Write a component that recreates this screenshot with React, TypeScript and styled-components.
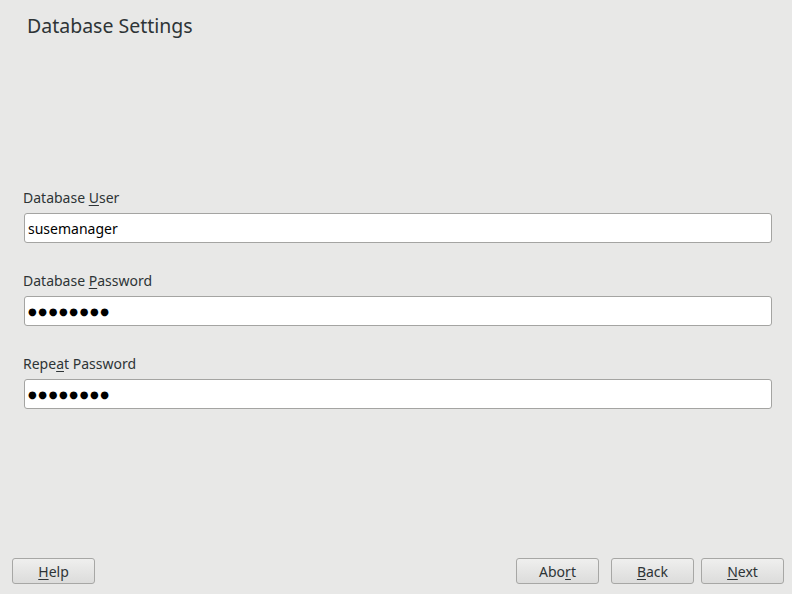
import React, { useState } from "react";
import styled, { createGlobalStyle } from "styled-components";

const GlobalStyle = createGlobalStyle`
  html, body {
    margin: 0;
    padding: 0;
    background: #e8e8e7;
    font-family: "Noto Sans", "Open Sans", sans-serif;
    color: #2e3436;
  }
`;

const fields = [
  { key: "user", label: "Database ", mnemonic: "U", rest: "ser", value: "susemanager", type: "text" },
  { key: "pass", label: "Database ", mnemonic: "P", rest: "assword", value: "●●●●●●●●", type: "secret" },
  { key: "repeat", label: "Repe", mnemonic: "a", rest: "t Password", value: "●●●●●●●●", type: "secret" },
];

const App = () => {
  const [values, setValues] = useState<Record<string, string>>({
    user: "susemanager",
  });

  return (
    <>
      <GlobalStyle />
      <Page>
        <Title>Database Settings</Title>
        <Form>
          {fields.map((f) => (
            <Field key={f.key}>
              <Label>
                {f.label}
                <u>{f.mnemonic}</u>
                {f.rest}
              </Label>
              {f.type === "secret" ? (
                <Input $secret value={f.value} readOnly />
              ) : (
                <Input
                  value={values[f.key]}
                  onChange={(e) => setValues({ ...values, [f.key]: e.target.value })}
                />
              )}
            </Field>
          ))}
        </Form>
        <ButtonBar>
          <Button>
            <u>H</u>elp
          </Button>
          <Spacer />
          <Button>
            Abo<u>r</u>t
          </Button>
          <Button $gap={12}>
            <u>B</u>ack
          </Button>
          <Button $gap={7}>
            <u>N</u>ext
          </Button>
        </ButtonBar>
      </Page>
    </>
  );
};

const Page = styled.div`
  width: 792px;
  height: 594px;
  display: flex;
  flex-direction: column;
  box-sizing: border-box;
  padding: 12px 8px 10px 12px;
`;

const Title = styled.h1`
  margin: 0 0 0 15px;
  font-size: 19.5px;
  font-weight: 400;
  line-height: 28px;
  color: #2e3436;
`;

const Form = styled.div`
  display: flex;
  flex-direction: column;
  gap: 28px;
  margin: 148px 0 0 11px;
  flex: 1;
`;

const Field = styled.div`
  display: flex;
  flex-direction: column;
  gap: 6px;
`;

const Label = styled.label`
  font-size: 14px;
  line-height: 19px;
  color: #2e3436;
  u {
    text-decoration-thickness: 1px;
    text-underline-offset: 2px;
  }
`;

const Input = styled.input<{ $secret?: boolean }>`
  box-sizing: border-box;
  margin-left: 1px;
  width: 748px;
  height: 30px;
  border: 1px solid #a4a4a2;
  border-radius: 3px;
  background: #ffffff;
  padding: 0 3px;
  font-family: ${({ $secret }) =>
    $secret ? '"DejaVu Sans", sans-serif' : '"Noto Sans", "Open Sans", sans-serif'};
  font-size: ${({ $secret }) => ($secret ? "10px" : "14px")};
  letter-spacing: ${({ $secret }) => ($secret ? "1.6px" : "0")};
  color: #000;
  outline: none;
`;

const ButtonBar = styled.div`
  display: flex;
  align-items: center;
`;

const Spacer = styled.div`
  flex: 1;
`;

const Button = styled.button<{ $gap?: number }>`
  width: 83px;
  height: 26px;
  margin-left: ${({ $gap }) => $gap ?? 0}px;
  box-sizing: border-box;
  border: 1px solid #a7a7a5;
  border-radius: 3px;
  background: linear-gradient(#efefee, #dcdcdb);
  font-family: "Noto Sans", "Open Sans", sans-serif;
  font-size: 14px;
  color: #2e3436;
  padding: 0;
  u {
    text-decoration-thickness: 1px;
    text-underline-offset: 2px;
  }
`;

export default App;
